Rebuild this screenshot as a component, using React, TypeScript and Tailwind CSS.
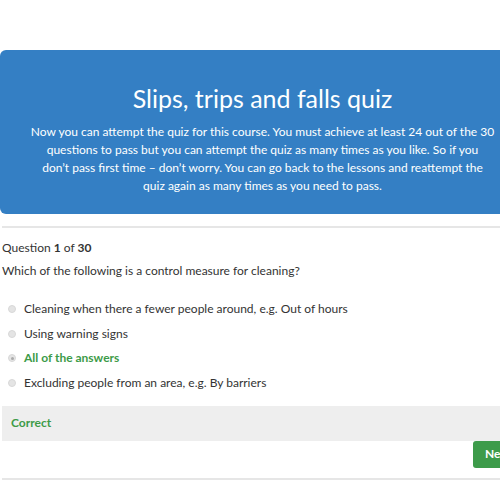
const OPTIONS = [
  { label: 'Cleaning when there a fewer people around, e.g. Out of hours', correct: false },
  { label: 'Using warning signs', correct: false },
  { label: 'All of the answers', correct: true },
  { label: 'Excluding people from an area, e.g. By barriers', correct: false },
];

export default function App() {
  return (
    <div className="w-[500px] h-[500px] overflow-hidden bg-white text-[#333] font-['Lato',sans-serif]">
      <div className="w-[525px] pt-[50px]">
        {/* Banner */}
        <div className="h-[164px] rounded-[6px] bg-[#347fc4] text-white text-center pt-[31px] px-[20px]">
          <h1 className="text-[25px] leading-[34px] font-normal">Slips, trips and falls quiz</h1>
          <p className="mt-[8px] text-[12px] leading-[18px]">
            Now you can attempt the quiz for this course. You must achieve at least 24 out of the 30
            <br />
            questions to pass but you can attempt the quiz as many times as you like. So if you
            <br />
            don’t pass first time – don’t worry. You can go back to the lessons and reattempt the
            <br />
            quiz again as many times as you need to pass.
          </p>
        </div>

        <div className="ml-[2px] mt-[12px] h-[2px] bg-[#e6e6e6]" />

        {/* Question */}
        <div className="pl-[2px]">
          <div className="mt-[11px] text-[12px] leading-[18px]">
            Question <b>1</b> of <b>30</b>
          </div>
          <div className="mt-[5px] text-[12px] leading-[18px]">
            Which of the following is a control measure for cleaning?
          </div>

          <ul className="mt-[20px] flex flex-col gap-[6.5px]">
            {OPTIONS.map((opt) => (
              <li key={opt.label} className="flex items-center h-[18px] text-[12px]">
                <span className="ml-[6px] mr-[8px] w-[8px] h-[8px] rounded-full bg-[#e4e4e4] border border-[#d8d8d8] flex items-center justify-center">
                  {opt.correct && <span className="w-[3px] h-[3px] rounded-full bg-[#aaa]" />}
                </span>
                <span className={opt.correct ? 'text-[#3d9b48] font-bold' : ''}>{opt.label}</span>
              </li>
            ))}
          </ul>

          <div className="mt-[14px] h-[35px] bg-[#eeeeee] flex items-center pl-[9px]">
            <span className="text-[12px] font-bold text-[#3d9b48]">Correct</span>
          </div>

          <div className="flex justify-end">
            <button className="h-[27px] pl-[12px] pr-[14px] rounded-[3px] bg-[#3d9b4a] text-white text-[12px] font-bold">
              Next
            </button>
          </div>

          <div className="mt-[10px] h-[2px] bg-[#e6e6e6]" />
        </div>
      </div>
    </div>
  );
}
